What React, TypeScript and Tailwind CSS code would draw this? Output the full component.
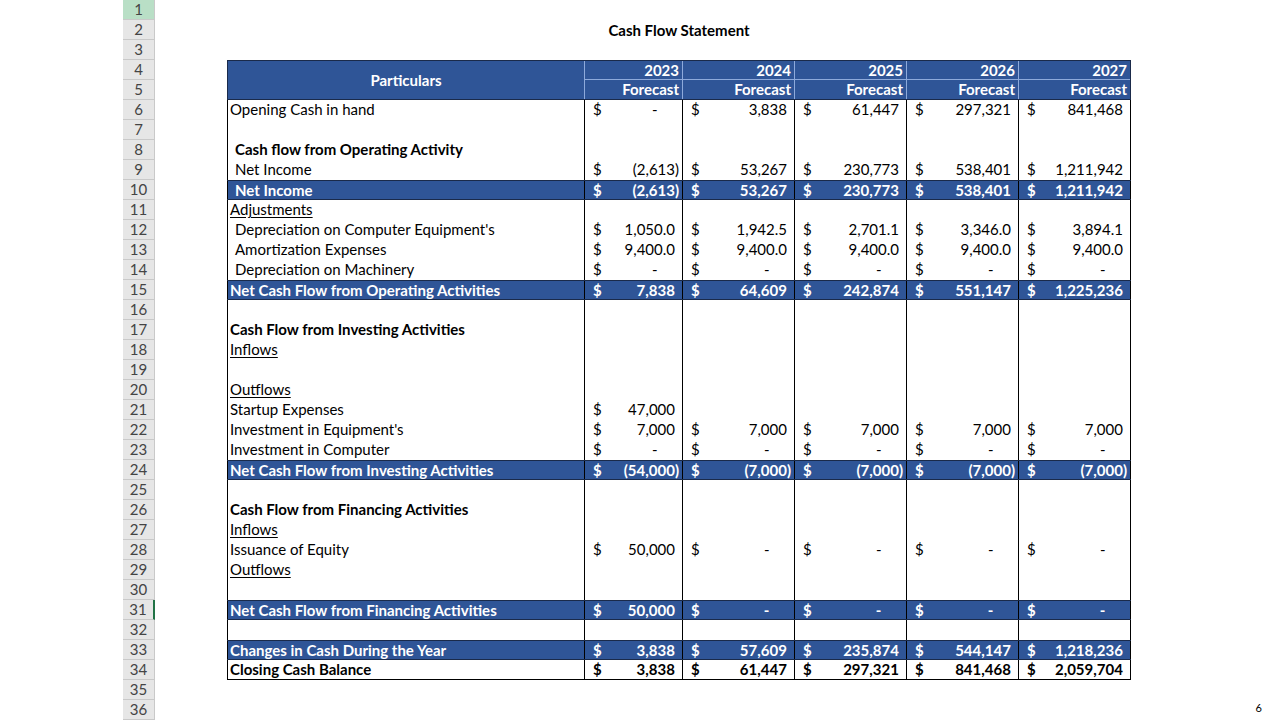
import React from "react";

type Row = {
  label?: string;
  kind?: "plain" | "bold" | "blue" | "under" | "total";
  indent?: boolean;
  values?: (string | null)[];
};

const dash = ["-", "-", "-", "-", "-"];

const rows: Row[] = [
  { label: "Opening Cash in hand", values: ["-", "3,838", "61,447", "297,321", "841,468"] },
  {},
  { label: "Cash flow from Operating Activity", kind: "bold", indent: true },
  { label: "Net Income", indent: true, values: ["(2,613)", "53,267", "230,773", "538,401", "1,211,942"] },
  { label: "Net Income", kind: "blue", indent: true, values: ["(2,613)", "53,267", "230,773", "538,401", "1,211,942"] },
  { label: "Adjustments", kind: "under" },
  { label: "Depreciation on Computer Equipment's", indent: true, values: ["1,050.0", "1,942.5", "2,701.1", "3,346.0", "3,894.1"] },
  { label: "Amortization Expenses", indent: true, values: ["9,400.0", "9,400.0", "9,400.0", "9,400.0", "9,400.0"] },
  { label: "Depreciation on Machinery", indent: true, values: dash },
  { label: "Net Cash Flow from Operating Activities", kind: "blue", values: ["7,838", "64,609", "242,874", "551,147", "1,225,236"] },
  {},
  { label: "Cash Flow from Investing Activities", kind: "bold" },
  { label: "Inflows", kind: "under" },
  {},
  { label: "Outflows", kind: "under" },
  { label: "Startup Expenses", values: ["47,000", null, null, null, null] },
  { label: "Investment in Equipment's", values: ["7,000", "7,000", "7,000", "7,000", "7,000"] },
  { label: "Investment in Computer", values: dash },
  { label: "Net Cash Flow from Investing Activities", kind: "blue", values: ["(54,000)", "(7,000)", "(7,000)", "(7,000)", "(7,000)"] },
  {},
  { label: "Cash Flow from Financing Activities", kind: "bold" },
  { label: "Inflows", kind: "under" },
  { label: "Issuance of Equity", values: ["50,000", "-", "-", "-", "-"] },
  { label: "Outflows", kind: "under" },
  {},
  { label: "Net Cash Flow from Financing Activities", kind: "blue", values: ["50,000", "-", "-", "-", "-"] },
  {},
  { label: "Changes in Cash During the Year", kind: "blue", values: ["3,838", "57,609", "235,874", "544,147", "1,218,236"] },
  { label: "Closing Cash Balance", kind: "total", values: ["3,838", "61,447", "297,321", "841,468", "2,059,704"] },
];

const years = ["2023", "2024", "2025", "2026", "2027"];

const Amount = ({ v }: { v: string }) => {
  if (v.startsWith("(")) return <span>{v}</span>;
  if (v === "-")
    return (
      <span>
        -<span className="invisible">00)</span>
      </span>
    );
  return (
    <span>
      {v}
      <span className="invisible">)</span>
    </span>
  );
};

const SheetRow = ({ row }: { row: Row }) => {
  const blue = row.kind === "blue";
  const bold = blue || row.kind === "bold" || row.kind === "total";
  return (
    <div
      className={`grid grid-cols-[358px_98px_112px_112px_112px_112px] h-[20px] leading-[18px] ${
        blue ? "bg-[#2f5597] text-white border-y border-[#1a2a4a]" : "text-black"
      } ${row.kind === "total" ? "border-b border-black" : ""} ${bold ? "font-bold" : ""}`}
    >
      <div className={`border-x border-black whitespace-nowrap ${row.indent ? "pl-[7px]" : "pl-[2px]"}`}>
        <span className={row.kind === "under" ? "underline underline-offset-2" : ""}>{row.label}</span>
      </div>
      {years.map((y, i) => {
        const v = row.values ? row.values[i] : null;
        return (
          <div key={y} className="border-r border-black flex justify-between pl-[8px] pr-[3px] whitespace-nowrap">
            {v != null && (
              <>
                <span>$</span>
                <Amount v={v} />
              </>
            )}
          </div>
        );
      })}
    </div>
  );
};

export default function App() {
  const rowNums = Array.from({ length: 36 }, (_, i) => i + 1);
  return (
    <div className="relative w-[1280px] h-[720px] bg-white overflow-hidden flex text-[15px] font-['Lato','Liberation_Sans',sans-serif]">
      <div className="ml-[123px] w-[32px] flex flex-col">
        {rowNums.map((n) => (
          <div
            key={n}
            className={`h-[20px] flex items-center justify-center text-[15px] text-[#444] border-b border-[#c9c9c9] ${
              n === 1 ? "bg-[#b9dfc6] border-r border-r-[#c9c9c9]" : "bg-[#e6e6e6] border-r"
            } ${n === 31 ? "border-r-2 border-r-[#217346]" : n !== 1 ? "border-r-[#c9c9c9]" : ""}`}
          >
            {n}
          </div>
        ))}
      </div>

      <div className="ml-[72px] w-[904px] flex flex-col">
        <div className="h-[20px]" />
        <div className="h-[20px] flex items-center justify-center font-bold text-black">Cash Flow Statement</div>
        <div className="h-[20px]" />

        <div className="h-[40px] border border-[#1a2a4a] bg-[#2f5597] text-white font-bold grid grid-cols-[357px_98px_112px_112px_112px_111px] grid-rows-[19px_19px] leading-[18px]">
          <div className="row-span-2 border-r border-[#8eaadb] flex items-center justify-center">Particulars</div>
          {years.map((y, i) => (
            <div key={y} className={`border-b border-[#8eaadb] text-right pr-[3px] ${i < 4 ? "border-r" : ""}`}>
              {y}
            </div>
          ))}
          {years.map((y, i) => (
            <div key={y + "f"} className={`border-[#8eaadb] text-right pr-[3px] ${i < 4 ? "border-r" : ""}`}>
              Forecast
            </div>
          ))}
        </div>

        {rows.map((r, i) => (
          <SheetRow key={i} row={r} />
        ))}
      </div>

      <div className="absolute right-[18px] bottom-[4px] text-[11px] text-black">6</div>
    </div>
  );
}
